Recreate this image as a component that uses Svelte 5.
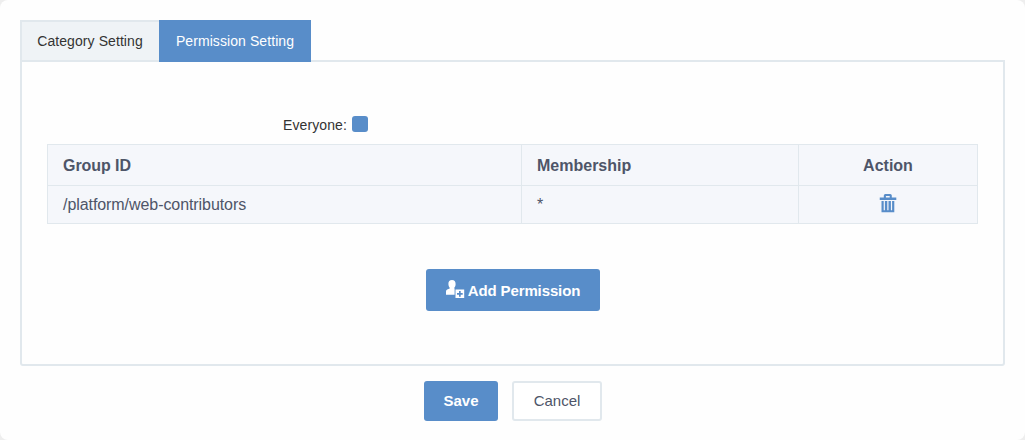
<script>
  const rows = [{ group: '/platform/web-contributors', membership: '*' }];
</script>

<main class="dialog">
  <nav class="tabs">
    <button class="tab category"><span>Category Setting</span></button>
    <button class="tab active"><span>Permission Setting</span></button>
  </nav>

  <section class="panel">
    <div class="everyone">
      <span class="label">Everyone:</span>
      <span class="check"></span>
    </div>

    <table>
      <colgroup><col class="c1" /><col class="c2" /><col class="c3" /></colgroup>
      <thead>
        <tr>
          <th class="tight">Group ID</th>
          <th>Membership</th>
          <th class="center">Action</th>
        </tr>
      </thead>
      <tbody>
        {#each rows as row}
          <tr>
            <td class="tight">{row.group}</td>
            <td>{row.membership}</td>
            <td class="center">
              <svg class="trash" width="18" height="19" viewBox="0 0 18 19">
                <path
                  fill="#588dc9"
                  fill-rule="evenodd"
                  d="M4.3 3.6V1.6Q4.3 0 5.9 0h4.8q1.6 0 1.6 1.6v2h4.5v2.5H0V3.6zM6.4 3.6h3.8V2H6.4zM2 6.9h12.8v11.3H2zM4.2 6.9v9.3h1.2V6.9zM7.8 6.9v9.3h1.2V6.9zM11.4 6.9v9.3h1.2V6.9z"
                />
              </svg>
            </td>
          </tr>
        {/each}
      </tbody>
    </table>

    <button class="primary add">
      <svg width="19" height="19" viewBox="0 0 19 19">
        <path
          fill="#fff"
          d="M6 0C3.6 0 2.3 1.6 2.4 4C2.5 5.8 3 7 3.7 7.8V8.6L1.2 9.6Q0 10.2 0 11.5V14.8H8.6V8.6H8.3V7.8C9.1 7 9.6 5.8 9.6 4C9.6 1.6 8.4 0 6 0Z"
        />
        <path
          fill="#fff"
          fill-rule="evenodd"
          d="M9.5 9.4h8.7V18H9.5zM13 11v2h-2v1.7h2v2h1.7v-2h2V13h-2v-2z"
        />
      </svg>
      <span>Add Permission</span>
    </button>
  </section>

  <footer>
    <button class="primary save"><span>Save</span></button>
    <button class="cancel"><span>Cancel</span></button>
  </footer>
</main>

<style>
  :global(body) {
    background: #eee;
  }
  .dialog {
    box-sizing: border-box;
    height: 440px;
    padding: 20px 20px 0;
    border-radius: 8px;
    background: #fefefe;
    font-family: 'Liberation Sans', Arial, sans-serif;
    color: #333;
  }
  button {
    box-sizing: border-box;
    margin: 0;
    padding: 0;
    border: 0;
    font: inherit;
    color: inherit;
    display: flex;
    align-items: center;
    justify-content: center;
  }
  .tabs {
    display: flex;
    height: 42px;
    margin-bottom: -2px;
    position: relative;
  }
  .tab {
    width: 152px;
    height: 42px;
    font-size: 14px;
    letter-spacing: 0.08px;
  }
  .tab.category {
    width: 139px;
    padding-right: 1px;
    border: 2px solid #e1e8ed;
    border-right: 0;
    background: #eff3f6;
  }
  .tab.active {
    background: #588dc9;
    color: #fff;
  }
  .panel {
    box-sizing: border-box;
    height: 306px;
    padding: 52px 25px 0;
    border: 2px solid #e1e8ed;
    border-radius: 0 0 3px 3px;
    display: flex;
    flex-direction: column;
    align-items: center;
  }
  .everyone {
    align-self: flex-start;
    display: flex;
    height: 30px;
    margin-left: 236px;
    gap: 5px;
    font-size: 14px;
    line-height: 22px;
    letter-spacing: 0.1px;
  }
  .check {
    width: 16px;
    height: 16px;
    margin-top: 2px;
    border-radius: 3px;
    background: #588dc9;
  }
  table {
    align-self: flex-start;
    width: 931px;
    margin-right: -1px;
    table-layout: fixed;
    border-collapse: separate;
    border-spacing: 0;
    border: solid #e1e8ed;
    border-width: 1px 0 0 1px;
    box-sizing: border-box;
    background: #f5f7fb;
    color: #4e5568;
    font-size: 16px;
  }
  .c1 { width: 474px; }
  .c2 { width: 277px; }
  .c3 { width: 179px; }
  th,
  td {
    box-sizing: border-box;
    padding: 0 15px;
    border: solid #e1e8ed;
    border-width: 0 1px 1px 0;
    text-align: left;
    vertical-align: middle;
  }
  th {
    height: 41px;
    padding-top: 2px;
  }
  td { height: 38px; }
  .tight { letter-spacing: -0.07px; }
  th.center,
  td.center {
    text-align: center;
  }
  .trash {
    display: block;
    margin: -2px auto 0;
    transform: translateX(0.5px);
  }
  .primary {
    border-radius: 3px;
    background: #588dc9;
    color: #fff;
    font-weight: bold;
    font-size: 15px;
  }
  .add {
    width: 174px;
    height: 42px;
    margin-top: 45px;
    gap: 3px;
    letter-spacing: -0.12px;
    padding-left: 1px;
  }
  .add svg {
    margin-top: -1px;
  }
  footer {
    display: flex;
    justify-content: center;
    gap: 14px;
    margin-top: 15px;
  }
  footer button {
    height: 40px;
    padding: 0 0 2px 1px;
  }
  .save {
    width: 74px;
  }
  .cancel {
    width: 90px;
    border: 2px solid #e1e8ed;
    border-radius: 3px;
    background: #fff;
    color: #4e5568;
    font-size: 15px;
  }
</style>
